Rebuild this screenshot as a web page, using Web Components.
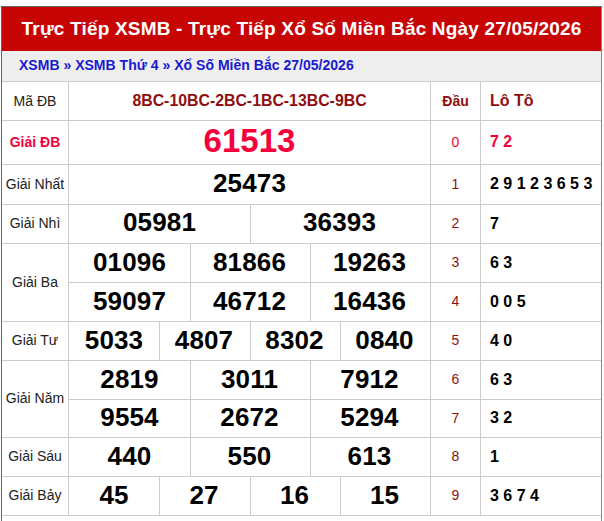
<!DOCTYPE html>
<html lang="vi"><head><meta charset="utf-8">
<style>html,body{margin:0;padding:0;background:#fff}</style></head>
<body>
<kq-board title-text="Trực Tiếp XSMB - Trực Tiếp Xổ Số Miền Bắc Ngày 27/05/2026"></kq-board>
<script>
const W={1:[361],2:[181,180],3:[121,120,120],4:[90,91,90,90]};
const DATA=[
 {label:'Giải ĐB',cls:'db',rows:[[ '61513' ]],h:[44],up:[1],big:1},
 {label:'Giải Nhất',rows:[['25473']],h:[40],up:[1]},
 {label:'Giải Nhì',rows:[['05981','36393']],h:[39],up:[1]},
 {label:'Giải Ba',rows:[['01096','81866','19263'],['59097','46712','16436']],h:[39,39]},
 {label:'Giải Tư',rows:[['5033','4807','8302','0840']],h:[39]},
 {label:'Giải Năm',rows:[['2819','3011','7912'],['9554','2672','5294']],h:[39,38],up:[0,1]},
 {label:'Giải Sáu',rows:[['440','550','613']],h:[39]},
 {label:'Giải Bảy',rows:[['45','27','16','15']],h:[39]}
];
const LOTO=['7 2','2 9 1 2 3 6 5 3','7','6 3','0 0 5','4 0','6 3','3 2','1','3 6 7 4'];
const LH=[44,40,39,39,39,39,39,38,39,39];
class KqNum extends HTMLElement{
 constructor(){super();this.attachShadow({mode:'open'}).innerHTML=`<style>
 :host{display:flex;align-items:center;justify-content:center;flex:none;min-width:0;box-sizing:border-box;border-left:1px solid #ccc;padding:0 2px 1px 0;font:bold 26px "Liberation Sans",Arial,sans-serif;letter-spacing:.15px;color:#000}
 :host(:first-child){border-left:0;padding-right:0}
 :host([up]){padding-bottom:3px}
 :host([big]){font-size:33px;letter-spacing:0;color:#f6003c}
 </style><slot></slot>`}
}
customElements.define('kq-num',KqNum);
class KqPrize extends HTMLElement{
 constructor(){super();this.attachShadow({mode:'open'}).innerHTML=`<style>
 :host{display:grid;grid-template-columns:67px 361px;border-top:1px solid #ccc}
 .label{display:flex;align-items:center;justify-content:center;border-right:1px solid #ccc;padding-bottom:2px;font:14px "Liberation Sans",Arial,sans-serif;color:#222}
 :host([db]) .label{color:#f6003c;font-weight:bold;padding-bottom:1px}
 .rows{display:flex;flex-direction:column;min-width:0}
 </style><div class="label"><slot name="label"></slot></div><div class="rows"><slot></slot></div>`}
}
customElements.define('kq-prize',KqPrize);
class KqRow extends HTMLElement{
 constructor(){super();this.attachShadow({mode:'open'}).innerHTML=`<style>
 :host{display:flex;box-sizing:border-box}
 :host([sep]){border-top:1px solid #ccc}
 </style><slot></slot>`}
}
customElements.define('kq-row',KqRow);
class KqLoto extends HTMLElement{
 constructor(){super();this.attachShadow({mode:'open'}).innerHTML=`<style>
 :host{display:grid;grid-template-columns:50px 1fr;box-sizing:border-box;border-top:1px solid #ccc;font:14px "Liberation Sans",Arial,sans-serif}
 .d{display:flex;align-items:center;justify-content:center;border-right:1px solid #ccc;padding-bottom:2px;color:#8f0f0f}
 .l{display:flex;align-items:center;padding:0 0 1px 9px;font-size:16px;font-weight:bold;color:#000}
 :host([hot]) .d,:host([hot]) .l{color:#f6003c}
 :host([hot]) .d,:host([head]) .d{padding-bottom:1px}
 :host([head]) .d{font-weight:bold;color:#8f0f0f}
 :host([head]) .l{color:#8f0f0f}
 </style><div class="d"><slot name="d"></slot></div><div class="l"><slot></slot></div>`}
}
customElements.define('kq-loto',KqLoto);
class KqBoard extends HTMLElement{
 constructor(){super();const r=this.attachShadow({mode:'open'});
 r.innerHTML=`<style>
 :host{display:block;box-sizing:border-box;width:601px;height:515px;margin:6px 0 0 1px;border:1px solid #666;border-bottom:0;border-right-color:#888;font-family:"Liberation Sans",Arial,sans-serif}
 h1{margin:0;height:44px;background:#c80505;color:#fff;font:bold 19px/44px "Liberation Sans",Arial,sans-serif;text-align:center;letter-spacing:.18px}
 nav{height:30px;box-sizing:border-box;background:#eee;padding-left:17px;font:bold 14px/29px "Liberation Sans",Arial,sans-serif;letter-spacing:.02px;color:#1a1ad0}
 .t{display:grid;grid-template-columns:429px 1fr;border-bottom:1px solid #ccc}
 .left,.right{display:flex;flex-direction:column;min-width:0}
 .right{border-left:1px solid #ccc;margin-left:-1px}
 .mdb{display:grid;grid-template-columns:67px 361px;height:39px;border-top:1px solid #ccc;box-sizing:border-box}
 .mdb b{display:flex;align-items:center;justify-content:center;border-right:1px solid #ccc;padding-bottom:1px;font:14px "Liberation Sans",Arial,sans-serif;color:#222}
 .mdb span{display:flex;align-items:center;justify-content:center;padding-bottom:1px;font:bold 15.85px "Liberation Sans",Arial,sans-serif;color:#8f0f0f}
 </style>
 <h1>${this.getAttribute('title-text')}</h1>
 <nav>XSMB » XSMB Thứ 4 » Xổ Số Miền Bắc 27/05/2026</nav>
 <div class="t"><div class="left"><div class="mdb"><b>Mã ĐB</b><span>8BC-10BC-2BC-1BC-13BC-9BC</span></div><slot name="p"></slot></div>
 <div class="right"><slot name="l"></slot></div></div>`;
 DATA.forEach(p=>{const e=document.createElement('kq-prize');e.slot='p';if(p.cls)e.setAttribute('db','');
  const s=document.createElement('span');s.slot='label';s.textContent=p.label;e.append(s);
  p.rows.forEach((row,i)=>{const rw=document.createElement('kq-row');if(i)rw.setAttribute('sep','');rw.style.height=(p.h[i]-(i==0?1:0))+'px';
   row.forEach((n,j)=>{const c=document.createElement('kq-num');if(p.big)c.setAttribute('big','');if(p.up&&p.up[i])c.setAttribute('up','');c.style.width=W[row.length][j]+'px';c.textContent=n;rw.append(c)});e.append(rw)});
  this.append(e)});
 const add=(d,l,a)=>{const e=document.createElement('kq-loto');e.slot='l';if(a)e.setAttribute(a,'');const s=document.createElement('span');s.slot='d';s.textContent=d;e.append(s,l);this.append(e);return e};
 add('Đầu','Lô Tô','head').style.height='39px';
 LOTO.forEach((l,i)=>{add(String(i),l,i==0?'hot':'').style.height=LH[i]+'px'});
 }
}
customElements.define('kq-board',KqBoard);
</script></body></html>
